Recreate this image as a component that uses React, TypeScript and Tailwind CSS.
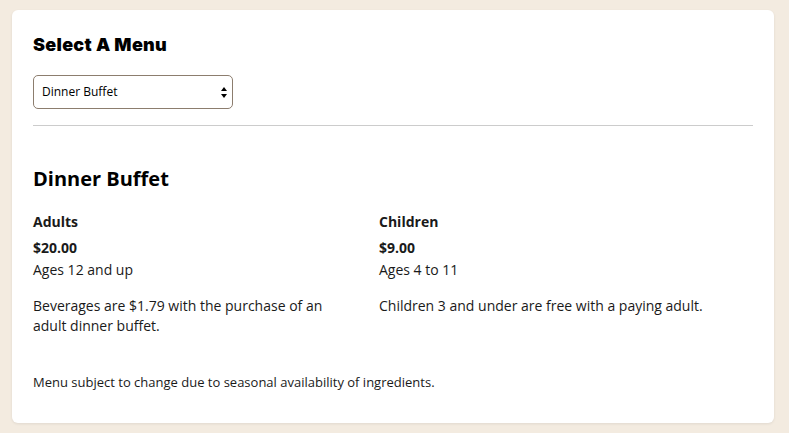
export default function App() {
  return (
    <div className="min-h-screen w-full bg-[#f3ebe0] pl-3 pr-[15px] pt-[10px] pb-3 font-['Open_Sans',sans-serif] text-[#1a1a1a]">
      <div className="rounded-md bg-white px-[21px] pt-[25px] pb-[32px] shadow-[0_1px_3px_rgba(0,0,0,0.08)]">
        {/* Menu picker */}
        <h1 className="font-['Inter',sans-serif] text-[18px] leading-[20px] font-black tracking-[0.3px] text-black">
          Select A Menu
        </h1>
        <div className="relative mt-[20px] h-[34px] w-[200px]">
          <select
            defaultValue="dinner"
            className="h-full w-full appearance-none rounded-[5px] border border-[#8c7d6e] bg-white pl-[8px] text-[12px] text-black outline-none"
          >
            <option value="lunch">Lunch Buffet</option>
            <option value="dinner">Dinner Buffet</option>
            <option value="weekend">Weekend Buffet</option>
          </select>
          <svg
            width="6"
            height="11"
            viewBox="0 0 6 11"
            className="pointer-events-none absolute top-[12px] right-[6px] fill-black"
          >
            <path d="M3 0 L6 4 L0 4 Z" />
            <path d="M0 7 L6 7 L3 11 Z" />
          </svg>
        </div>
        <hr className="mt-[16px] border-[#cccccc]" />

        {/* Selected menu */}
        <h2 className="mt-[40px] text-[20px] leading-[26px] font-bold text-black">Dinner Buffet</h2>
        <div className="mt-[20px] grid grid-cols-[346px_1fr] text-[14px] leading-[20px]">
          <div>
            <h3 className="font-bold">Adults</h3>
            <p className="mt-[6px] font-bold">$20.00</p>
            <p className="mt-[2px]">Ages 12 and up</p>
            <p className="mt-[16px] pr-[24px]">Beverages are $1.79 with the purchase of an adult dinner buffet.</p>
          </div>
          <div>
            <h3 className="font-bold">Children</h3>
            <p className="mt-[6px] font-bold">$9.00</p>
            <p className="mt-[2px]">Ages 4 to 11</p>
            <p className="mt-[16px]">Children 3 and under are free with a paying adult.</p>
          </div>
        </div>
        <p className="mt-[37px] text-[13px] leading-[18px]">
          Menu subject to change due to seasonal availability of ingredients.
        </p>
      </div>
    </div>
  );
}
